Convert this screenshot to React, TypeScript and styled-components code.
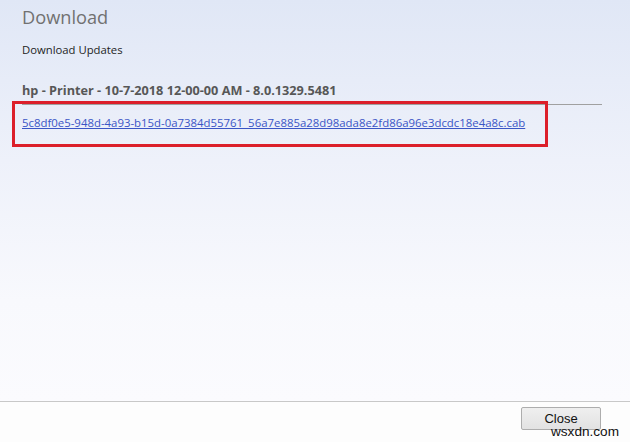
import React from "react";
import styled, { createGlobalStyle } from "styled-components";

const Global = createGlobalStyle`
  html, body { margin: 0; padding: 0; background: #fdfdfd; }
  * { box-sizing: border-box; }
`;

const Dialog = styled.div`
  position: relative;
  width: 630px;
  height: 442px;
  display: flex;
  flex-direction: column;
  font-family: "Open Sans", "Noto Sans", sans-serif;
  overflow: hidden;
`;

const Body = styled.div`
  flex: 1;
  background: linear-gradient(180deg, #e0e7f6 0%, #eef1fa 40%, #f8f9fd 75%, #fbfbfe 100%);
  padding: 4px 28px 0 22px;
  display: flex;
  flex-direction: column;
`;

const Title = styled.h1`
  margin: 0;
  font-size: 18.2px;
  line-height: 26px;
  font-weight: 400;
  color: #717171;
`;

const Subtitle = styled.div`
  margin-top: 12px;
  font-size: 11.3px;
  line-height: 16px;
  color: #1e1e1e;
`;

const Group = styled.div`
  margin-top: 24px;
`;

const GroupHeader = styled.div`
  font-size: 12.7px;
  line-height: 16px;
  font-weight: 700;
  color: #575757;
  padding-bottom: 6px;
  border-bottom: 1px solid #a0a0a0;
`;

const Highlight = styled.div`
  margin-left: -10px;
  width: 536px;
  height: 46px;
  margin-top: -4px;
  border: 3px solid #dc1f2a;
  padding: 6px 0 0 7px;
`;

const FileLink = styled.a`
  font-size: 11.4px;
  line-height: 16px;
  color: #3a55c6;
  text-decoration: underline;
  white-space: nowrap;
`;

const Footer = styled.div`
  height: 41px;
  border-top: 1px solid #c8c8c8;
  background: #fdfdfd;
  display: flex;
  justify-content: flex-end;
  align-items: flex-start;
  padding: 5px 29px 0 0;
`;

const Button = styled.button`
  width: 80px;
  height: 23px;
  border: 1px solid #adadad;
  border-radius: 2px;
  background: linear-gradient(180deg, #efefef, #e2e2e2);
  font-family: "Liberation Sans", Arial, sans-serif;
  font-size: 13px;
  color: #111;
  padding: 0;
`;

const Watermark = styled.span`
  position: absolute;
  right: 11px;
  bottom: 3px;
  font-family: "Liberation Sans", Arial, sans-serif;
  font-size: 13.6px;
  color: #111;
`;

export default function App() {
  return (
    <>
      <Global />
      <Dialog>
        <Body>
          <Title>Download</Title>
          <Subtitle>Download Updates</Subtitle>
          <Group>
            <GroupHeader>hp - Printer - 10-7-2018 12-00-00 AM - 8.0.1329.5481</GroupHeader>
            <Highlight>
              <FileLink href="#">
                5c8df0e5-948d-4a93-b15d-0a7384d55761_56a7e885a28d98ada8e2fd86a96e3dcdc18e4a8c.cab
              </FileLink>
            </Highlight>
          </Group>
        </Body>
        <Footer>
          <Button>Close</Button>
        </Footer>
        <Watermark>wsxdn.com</Watermark>
      </Dialog>
    </>
  );
}
